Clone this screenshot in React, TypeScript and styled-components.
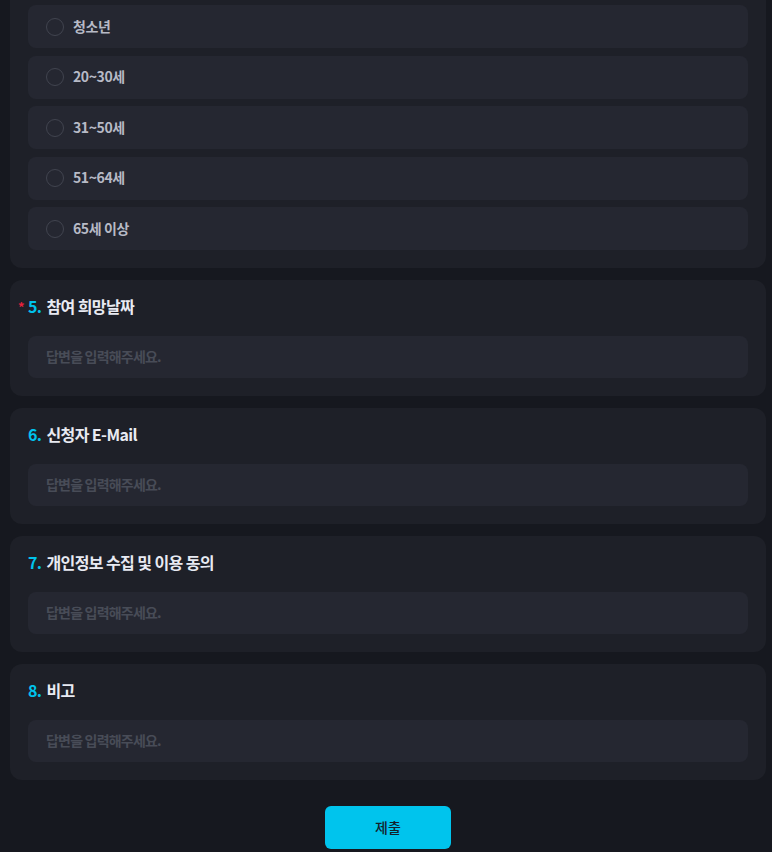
import React from "react";
import styled, { createGlobalStyle } from "styled-components";

const GlobalStyle = createGlobalStyle`
  html, body {
    margin: 0;
    padding: 0;
    background: #16181f;
  }
  body {
    font-family: "Noto Sans CJK KR", "Noto Sans", sans-serif;
  }
`;

const Page = styled.div`
  display: flex;
  flex-direction: column;
  gap: 12px;
  padding: 0 6px 4px 10px;
  min-height: 852px;
  box-sizing: border-box;
`;

const Card = styled.section<{ $cut?: boolean }>`
  background: #1e2028;
  border-radius: ${(p) => (p.$cut ? "0 0 12px 12px" : "12px")};
  padding: ${(p) => (p.$cut ? "5px 18px 18px" : "18px")};
  display: flex;
  flex-direction: column;
`;

const Options = styled.div`
  display: flex;
  flex-direction: column;
  gap: 7.5px;
`;

const Option = styled.label`
  display: flex;
  align-items: center;
  gap: 9px;
  height: 43px;
  box-sizing: border-box;
  padding: 0 18px 2px;
  background: #252731;
  border-radius: 8px;
  cursor: pointer;
  color: #b7bac6;
  font-size: 14px;
  font-weight: 700;
  letter-spacing: -0.4px;
`;

const Radio = styled.span`
  width: 18px;
  height: 18px;
  box-sizing: border-box;
  border-radius: 50%;
  border: 1px solid #41444f;
  flex-shrink: 0;
  margin-top: 2px;
`;

const Title = styled.h3`
  position: relative;
  margin: 0 0 18px;
  height: 20px;
  line-height: 17px;
  font-size: 16px;
  font-weight: 700;
  letter-spacing: -0.6px;
  color: #e8eaf2;
`;

const Required = styled.span`
  position: absolute;
  left: -10px;
  top: 0;
  color: #e5213c;
  font-size: 13px;
`;

const Num = styled.span`
  color: #00c3ec;
  margin-right: 5px;
`;

const Input = styled.input`
  height: 42px;
  box-sizing: border-box;
  padding: 0 18px 2px;
  background: #252731;
  border: none;
  border-radius: 8px;
  outline: none;
  color: #d0d3dc;
  font-family: inherit;
  font-size: 14px;
  font-weight: 700;
  letter-spacing: -0.8px;
  &::placeholder {
    color: #484c57;
  }
`;

const Footer = styled.div`
  display: flex;
  justify-content: center;
  padding-top: 14px;
`;

const Submit = styled.button`
  width: 126px;
  height: 43px;
  border: none;
  border-radius: 6px;
  background: #00c4ed;
  color: #14212b;
  font-family: inherit;
  font-size: 14px;
  font-weight: 500;
  padding-bottom: 3px;
  cursor: pointer;
`;

const ages = ["청소년", "20~30세", "31~50세", "51~64세", "65세 이상"];

const questions = [
  { n: 5, label: "참여 희망날짜", required: true },
  { n: 6, label: "신청자 E-Mail" },
  { n: 7, label: "개인정보 수집 및 이용 동의" },
  { n: 8, label: "비고" },
];

export default function App() {
  return (
    <>
      <GlobalStyle />
      <Page>
        <Card $cut>
          <Options>
            {ages.map((a) => (
              <Option key={a}>
                <Radio />
                {a}
              </Option>
            ))}
          </Options>
        </Card>
        {questions.map((q) => (
          <Card key={q.n}>
            <Title>
              {q.required && <Required>*</Required>}
              <Num>{q.n}.</Num>
              {q.label}
            </Title>
            <Input placeholder="답변을 입력해주세요." />
          </Card>
        ))}
        <Footer>
          <Submit>제출</Submit>
        </Footer>
      </Page>
    </>
  );
}
